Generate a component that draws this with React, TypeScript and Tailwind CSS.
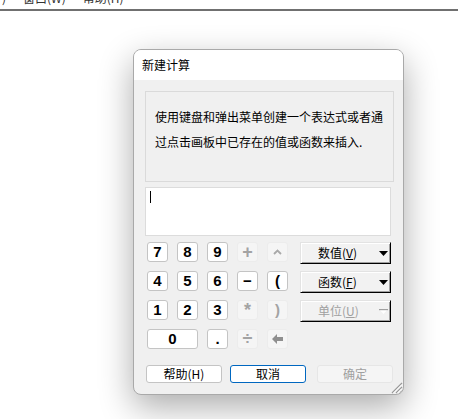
import React from "react";

type Key = { label: React.ReactNode; enabled: boolean; wide?: boolean; big?: boolean };

const ChevronUp = () => (
  <svg width="9" height="6" viewBox="0 0 9 6">
    <polyline points="1,5 4.5,1.5 8,5" fill="none" stroke="#a9a9a9" strokeWidth="1.8" />
  </svg>
);

const BackArrow = () => (
  <svg width="12" height="10" viewBox="0 0 12 10">
    <path d="M0 5 L5 0 L5 3 L11 3 L11 7 L5 7 L5 10 Z" fill="#8f8f8f" />
  </svg>
);

const keys: Key[] = [
  { label: "7", enabled: true },
  { label: "8", enabled: true },
  { label: "9", enabled: true },
  { label: "+", enabled: false, big: true },
  { label: <ChevronUp />, enabled: false },
  { label: "4", enabled: true },
  { label: "5", enabled: true },
  { label: "6", enabled: true },
  { label: "−", enabled: true },
  { label: "(", enabled: true },
  { label: "1", enabled: true },
  { label: "2", enabled: true },
  { label: "3", enabled: true },
  { label: "*", enabled: false, big: true },
  { label: ")", enabled: false },
  { label: "0", enabled: true, wide: true },
  { label: ".", enabled: true },
  { label: "÷", enabled: false, big: true },
  { label: <BackArrow />, enabled: false },
];

function KeyButton({ k }: { k: Key }) {
  return (
    <div
      className={
        k.enabled
          ? `${k.wide ? "col-span-2" : ""} flex items-center justify-center rounded-[3px] border border-[#c4c4c4] bg-white text-[15px] font-bold text-black`
          : `flex items-center justify-center rounded-[3px] border border-[#ececec] bg-[#f5f5f5] font-bold text-[#a3a3a3] ${k.big ? "text-[18px]" : "text-[15px]"}`
      }
    >
      {k.label}
    </div>
  );
}

function DropButton({ text, hot, disabled }: { text: string; hot: string; disabled?: boolean }) {
  return (
    <div className="relative flex h-[22px] items-center border border-t-[#e3e3e3] border-l-[#e3e3e3] border-b-black border-r-black bg-[#f2f2f2] pl-[17px] shadow-[inset_1px_1px_0_#ffffff,inset_-1px_-1px_0_#a0a0a0]">
      <span className={disabled ? "text-[12px] text-[#a0a0a0]" : "text-[12px] text-black"}>
        {text}(<span className="underline">{hot}</span>)
      </span>
      <div className="absolute right-[2px] top-[8px]">
        {disabled ? (
          <svg width="9" height="5" viewBox="0 0 9 5">
            <path d="M0 0 L9 0 L4.5 5 Z" fill="#ffffff" />
            <rect x="0" y="0" width="9" height="1.2" fill="#a0a0a0" />
          </svg>
        ) : (
          <svg width="9" height="5" viewBox="0 0 9 5">
            <path d="M0 0 L9 0 L4.5 5 Z" fill="#000000" />
          </svg>
        )}
      </div>
    </div>
  );
}

export default function App() {
  return (
    <div className="relative h-[419px] w-[458px] overflow-hidden bg-white font-['Noto_Sans_CJK_SC','Liberation_Sans',sans-serif]">
      <div className="h-[9px] overflow-hidden">
        <div className="-mt-[10px] flex text-[12px] leading-[16px] text-[#333333]">
          <span className="ml-[2px]">)</span>
          <span className="ml-[17px]">窗口(W)</span>
          <span className="ml-[17px]">帮助(H)</span>
        </div>
      </div>
      <div className="h-[2px] bg-[#707070]" />

      <div className="relative ml-[133px] mt-[38px] flex h-[346px] w-[271px] flex-col overflow-hidden rounded-[8px] border border-[#a9a9a9] bg-[#f0f0f0] shadow-[0_12px_34px_rgba(0,0,0,0.33)]">
        <div className="flex h-[30px] items-center bg-white pl-[8px] text-[12px] text-black">新建计算</div>

        <div className="flex flex-col pl-[11px] pr-[9px] pt-[11px]">
          <div className="h-[91px] border border-[#dadada] pl-[9px] pt-[12px] text-[12px] leading-[25px] text-black whitespace-nowrap">
            使用键盘和弹出菜单创建一个表达式或者通
            <br />
            过点击画板中已存在的值或函数来插入.
          </div>

          <div className="relative mr-[3px] mt-[5px] h-[49px] border border-[#dcdcdc] bg-white">
            <div className="absolute left-[4px] top-[3px] h-[12px] w-px bg-black" />
          </div>

          <div className="mt-[6px] flex">
            <div className="ml-[2px] grid grid-cols-[repeat(5,21px)] auto-rows-[20px] gap-[9px] font-['Liberation_Sans','Noto_Sans_CJK_SC',sans-serif]">
              {keys.map((k, i) => (
                <KeyButton key={i} k={k} />
              ))}
            </div>
            <div className="ml-[12px] flex w-[91px] flex-col gap-[7px]">
              <DropButton text="数值" hot="V" />
              <DropButton text="函数" hot="F" />
              <DropButton text="单位" hot="U" disabled />
            </div>
          </div>

          <div className="mt-[16px] flex text-[12px]">
            <div className="ml-[1px] flex h-[18px] w-[76px] items-center justify-center rounded-[3px] border border-[#c4c4c4] bg-white text-black">
              帮助(H)
            </div>
            <div className="ml-[8px] flex h-[18px] w-[76px] items-center justify-center rounded-[3px] border border-[#0067c0] bg-white text-black">
              取消
            </div>
            <div className="ml-[11px] flex h-[18px] w-[76px] items-center justify-center rounded-[3px] border border-[#e6e6e6] bg-[#f5f5f5] text-[#a0a0a0]">
              确定
            </div>
          </div>
        </div>

        <div className="absolute bottom-0 right-0">
          <svg width="14" height="14" viewBox="0 0 14 14">
            <line x1="13" y1="3" x2="3" y2="13" stroke="#9a9a9a" strokeWidth="1.2" />
            <line x1="13" y1="7" x2="7" y2="13" stroke="#9a9a9a" strokeWidth="1.2" />
            <line x1="13" y1="11" x2="11" y2="13" stroke="#9a9a9a" strokeWidth="1.2" />
            <line x1="13" y1="4.5" x2="4.5" y2="13" stroke="#ffffff" strokeWidth="1" />
            <line x1="13" y1="8.5" x2="8.5" y2="13" stroke="#ffffff" strokeWidth="1" />
          </svg>
        </div>
      </div>
    </div>
  );
}
